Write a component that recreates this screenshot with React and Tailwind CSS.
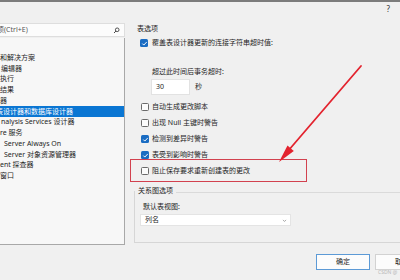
import React from 'react'

const treeItems = [
  { text: '和解决方案', pad: 0 },
  { text: '编辑器', pad: 1 },
  { text: '执行', pad: 0 },
  { text: '结果', pad: 0 },
  { text: '器', pad: 0 },
  { text: '表设计器和数据库设计器', pad: -4, selected: true },
  { text: 'nalysis Services 设计器', pad: 1 },
  { text: 're 服务', pad: 0 },
  { text: 'Server Always On', pad: 4 },
  { text: 'Server 对象资源管理器', pad: 4 },
  { text: 'ent 探查器', pad: 0 },
  { text: '窗口', pad: 0 },
]

const options = [
  { label: '自动生成更改脚本', checked: false },
  { label: '出现 Null 主键时警告', checked: false },
  { label: '检测到差异时警告', checked: true },
  { label: '表受到影响时警告', checked: true },
  { label: '阻止保存要求重新创建表的更改', checked: false },
]

function Check({ checked }) {
  if (checked) {
    return (
      <span className="w-[8px] h-[8px] rounded-[1.5px] bg-[#1a6cc2] flex items-center justify-center shrink-0">
        <svg viewBox="0 0 8 8" className="w-[7px] h-[7px]">
          <path d="M1.5 4.1 L3.2 5.8 L6.6 2.2" fill="none" stroke="#fff" strokeWidth="1.1" />
        </svg>
      </span>
    )
  }
  return <span className="w-[8px] h-[8px] rounded-[1.5px] border border-[#6a6a6a] bg-[#fbfbfb] shrink-0" />
}

export default function App() {
  return (
    <div className="w-[400px] h-[280px] bg-[#f0f0f0] overflow-hidden relative flex flex-col text-[#1e1e1e] font-['Noto_Sans','Noto_Sans_CJK_SC',sans-serif]">
      <div className="h-[2px] bg-[#7c7c7c] shrink-0" />
      <div className="h-[21px] shrink-0 flex justify-end pr-[10px] pt-[2px]">
        <span className="text-[8px] leading-[10px] text-[#333]">?</span>
      </div>

      <div className="flex h-[257px]">
        {/* left tree */}
        <div className="w-[125px] shrink-0 flex flex-col">
          <div className="h-[14px] bg-[#fcfcfc] border-y border-r border-[#dedede] flex items-center justify-between pr-[4px] overflow-hidden">
            <span className="text-[7px] leading-[10px] text-[#555] ml-[-3px] whitespace-nowrap">项(Ctrl+E)</span>
            <svg viewBox="0 0 10 10" className="w-[7px] h-[7px]">
              <circle cx="6" cy="4" r="2.6" fill="none" stroke="#333" strokeWidth="1.2" />
              <path d="M4.1 5.9 L1.5 8.5" stroke="#333" strokeWidth="1.4" />
            </svg>
          </div>
          <div className="mt-[1px] h-[207px] bg-[#f7f7f7] border-r border-b border-[#a8a8a8] pt-[14.5px] overflow-hidden">
            {treeItems.map((item) => (
              <div
                key={item.text}
                className={
                  item.selected
                    ? 'h-[10.75px] flex items-center bg-[#0a76d3] text-white overflow-hidden'
                    : 'h-[10.75px] flex items-center overflow-hidden'
                }
              >
                <span className="text-[7px] leading-[10px] whitespace-nowrap" style={{ marginLeft: item.pad }}>
                  {item.text}
                </span>
              </div>
            ))}
          </div>
        </div>

        {/* right panel */}
        <div className="flex-1 flex flex-col text-[7px] leading-[10px]">
          <div className="h-[12px] flex items-center pl-[12px]">表选项</div>
          <div className="mt-[2px] h-[12px] flex items-center gap-[4px] pl-[15px]">
            <Check checked />
            <span className="whitespace-nowrap">覆盖表设计器更新的连接字符串超时值:</span>
          </div>
          <div className="mt-[17px] h-[12px] flex items-center pl-[27px]">超过此时间后事务超时:</div>
          <div className="mt-[1px] h-[16px] flex items-center pl-[26px]">
            <div className="w-[39px] h-[16px] bg-white border border-[#e2e2e2] flex items-center pl-[4px]">30</div>
            <span className="ml-[5px]">秒</span>
          </div>
          <div className="mt-[4px] flex flex-col">
            {options.map((o) => (
              <div key={o.label} className="h-[16px] flex items-center gap-[3px] pl-[16px]">
                <Check checked={o.checked} />
                <span className="whitespace-nowrap">{o.label}</span>
              </div>
            ))}
          </div>

          <div className="mt-[12px] ml-[9px] h-[52px] border-l border-b border-[#d6d6d6] flex flex-col">
            <div className="h-[12px] flex items-center mt-[-6px]">
              <span className="pl-[3px] pr-[3px] bg-[#f0f0f0]">关系图选项</span>
              <div className="flex-1 h-px bg-[#dadada] mt-[3px]" />
            </div>
            <div className="mt-[4px] h-[12px] flex items-center pl-[8px]">默认表视图:</div>
            <div className="mt-[1px] ml-[5px] w-[151px] h-[12px] bg-white border border-[#e4e4e4] flex items-center justify-between pl-[4px] pr-[3px]">
              <span>列名</span>
              <svg viewBox="0 0 8 8" className="w-[5px] h-[5px]">
                <path d="M1.5 3 L4 5.5 L6.5 3" fill="none" stroke="#666" strokeWidth="0.9" />
              </svg>
            </div>
          </div>

          <div className="mt-[11px] h-[16px] flex justify-end gap-[5px] mr-[-29px]">
            <div className="w-[54px] h-[16px] bg-[#fcfcfc] border border-[#5c9ad6] flex items-center justify-center">确定</div>
            <div className="w-[54px] h-[16px] bg-[#fcfcfc] border border-[#d2d2d2] flex items-center justify-center">取消</div>
          </div>
        </div>
      </div>

      <span className="absolute left-[378px] top-[269px] text-[5px] leading-[6px] text-[#b8b8b8] whitespace-nowrap">CSDN @</span>

      {/* annotations */}
      <div className="absolute left-[130px] top-[159px] w-[177px] h-[23px] border border-[#d2414f]" />
      <svg className="absolute left-0 top-0 pointer-events-none" width="400" height="280" viewBox="0 0 400 280">
        <path d="M361 66 L288 151" stroke="#e3232e" strokeWidth="1.8" strokeLinecap="round" />
        <polygon points="279,162 287.5,145.5 293.8,151" fill="#e3232e" />
      </svg>
    </div>
  )
}
